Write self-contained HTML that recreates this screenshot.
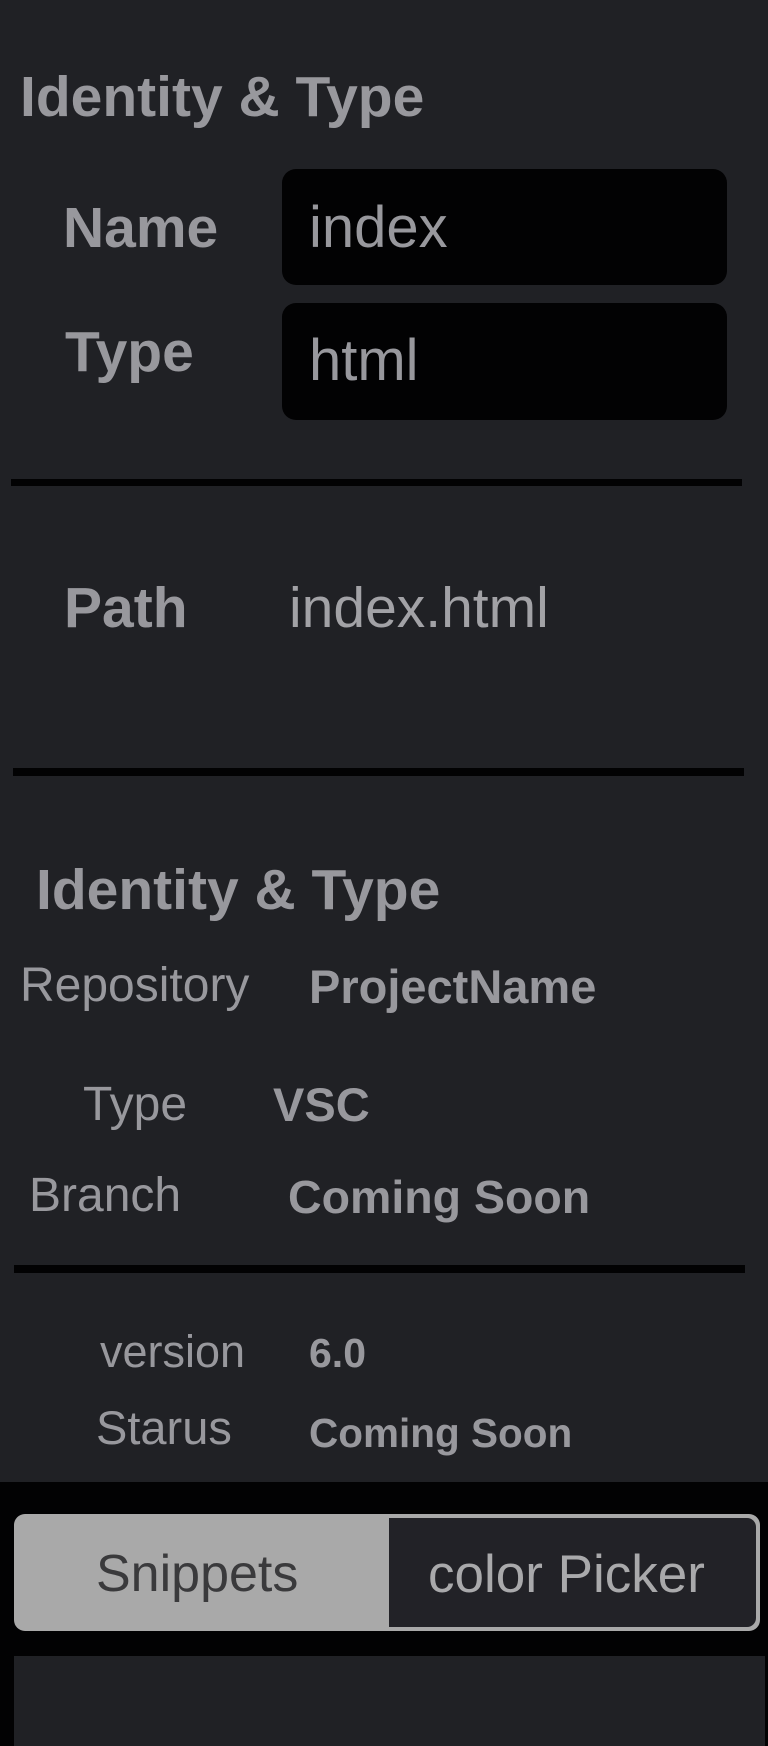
<!DOCTYPE html>
<html><head><meta charset="utf-8"><style>
html,body{margin:0;padding:0}
body{width:768px;height:1746px;background:#202125;position:relative;overflow:hidden;font-family:"Liberation Sans",sans-serif;color:#98989d}
.t{position:absolute;line-height:1;white-space:nowrap}
.b{font-weight:bold}
.box{position:absolute;background:#020203;border-radius:14px}
.hr{position:absolute;background:#020203}
</style></head><body>
<div class="t b" style="left:20px;top:69px;font-size:57px">Identity &amp; Type</div>

<div class="box" style="left:282px;top:169px;width:445px;height:116px"></div>
<div class="box" style="left:282px;top:303px;width:445px;height:117px"></div>
<div class="t b" style="left:63px;top:200px;font-size:57px">Name</div>
<div class="t" style="left:309px;top:199px;font-size:58px">index</div>
<div class="t b" style="left:65px;top:324px;font-size:57px">Type</div>
<div class="t" style="left:309px;top:332px;font-size:58px">html</div>

<div class="hr" style="left:11px;top:479px;width:731px;height:7px"></div>

<div class="t b" style="left:64px;top:580px;font-size:57px">Path</div>
<div class="t" style="left:289px;top:580px;font-size:57px;color:#a2a2a6">index.html</div>

<div class="hr" style="left:13px;top:768px;width:731px;height:8px"></div>

<div class="t b" style="left:36px;top:862px;font-size:57px">Identity &amp; Type</div>
<div class="t" style="left:20px;top:962px;font-size:48px">Repository</div>
<div class="t b" style="left:309px;top:963px;font-size:47px">ProjectName</div>
<div class="t" style="left:83px;top:1081px;font-size:48px">Type</div>
<div class="t b" style="left:273px;top:1081px;font-size:47px">VSC</div>
<div class="t" style="left:29px;top:1172px;font-size:48px">Branch</div>
<div class="t b" style="left:288px;top:1174px;font-size:46.5px">Coming Soon</div>

<div class="hr" style="left:14px;top:1265px;width:731px;height:8px"></div>

<div class="t" style="left:100px;top:1329px;font-size:45px">version</div>
<div class="t b" style="left:309px;top:1333px;font-size:41px">6.0</div>
<div class="t" style="left:96px;top:1404px;font-size:47px">Starus</div>
<div class="t b" style="left:309px;top:1413px;font-size:40.5px">Coming Soon</div>

<div style="position:absolute;left:0;top:1482px;width:768px;height:264px;background:#020203"></div>
<div style="position:absolute;left:14px;top:1656px;width:751px;height:90px;background:#202125"></div>
<div style="position:absolute;left:14px;top:1514px;width:746px;height:117px;background:#a9a9a9;border-radius:11px;overflow:hidden">
  <div style="position:absolute;left:375px;top:4px;right:4px;bottom:4px;background:#222227;border-radius:0 9px 9px 0"></div>
</div>
<div class="t" style="left:96px;top:1548px;font-size:52px;color:#3a3a3c">Snippets</div>
<div class="t" style="left:428px;top:1548px;font-size:53px;color:#a9a9ab">color Picker</div>
</body></html>
